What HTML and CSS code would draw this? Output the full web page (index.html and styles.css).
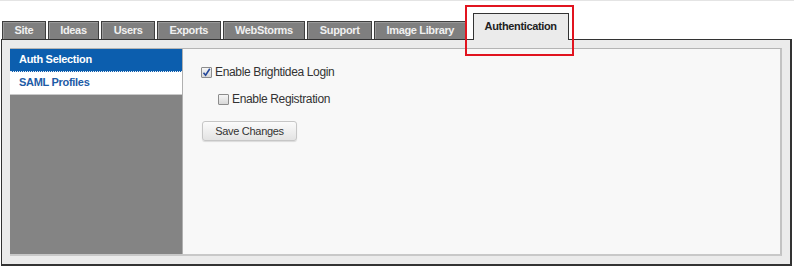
FILE: index.html
```html
<!DOCTYPE html>
<html lang="en">
<head>
    <meta charset="UTF-8">
    <title>Admin - Authentication</title>
    <link rel="stylesheet" href="styles.css">
</head>
<body>
    <div class="top-line"></div>

    <div class="header">
        <ul class="tabs">
            <li class="tab">Site</li>
            <li class="tab">Ideas</li>
            <li class="tab">Users</li>
            <li class="tab">Exports</li>
            <li class="tab">WebStorms</li>
            <li class="tab">Support</li>
            <li class="tab">Image Library</li>
            <li class="tab active">Authentication</li>
        </ul>
        <div class="highlight"></div>
    </div>

    <div class="panel">
        <div class="panel-inner">
            <ul class="side-menu">
                <li class="side-item selected">Auth Selection</li>
                <li class="side-item">SAML Profiles</li>
            </ul>
            <div class="content">
                <label class="option">
                    <span class="check checked">
                        <svg width="9" height="9" viewBox="0 0 9 9"><path d="M1.5 4.8 L3.6 7.2 L7.8 0.8" fill="none" stroke="#24479a" stroke-width="1.6"/></svg>
                    </span>
                    Enable Brightidea Login
                </label>
                <label class="option sub">
                    <span class="check"></span>
                    Enable Registration
                </label>
                <button class="save-btn">Save Changes</button>
            </div>
        </div>
    </div>
</body>
</html>
```

FILE: styles.css
```css
body {
    margin: 0;
    padding: 0;
    background: #fff;
    font-family: "Liberation Sans", Arial, sans-serif;
    color: #333;
}

.top-line {
    height: 1px;
    background: #e4e4e4;
}

.header {
    position: relative;
    margin-top: 12px;
}

.tabs {
    list-style: none;
    margin: 0;
    padding: 0 0 0 2px;
    display: flex;
    align-items: flex-end;
}

.tab {
    box-sizing: border-box;
    height: 18px;
    line-height: 17px;
    padding: 0 11.5px;
    margin-right: 2px;
    background: #7f7f7f;
    color: #f0f0f0;
    border: 1px solid #3e3e3e;
    border-bottom: none;
    box-shadow: inset 1px 1px 0 #9a9a9a;
    font-size: 11px;
    font-weight: bold;
    letter-spacing: -0.35px;
}

.tab.active {
    height: 27px;
    line-height: 25px;
    margin-left: 4px;
    margin-bottom: -1px;
    padding: 0 11px;
    position: relative;
    z-index: 1;
    background: #ebebeb;
    color: #222;
    border-color: #333;
    box-shadow: none;
}

.highlight {
    position: absolute;
    left: 465px;
    top: -8px;
    width: 105px;
    height: 47px;
    border: 2px solid #e1141f;
    z-index: 2;
}

.panel {
    box-sizing: border-box;
    margin-left: 1px;
    width: 791px;
    background: #ebebeb;
    border: 1px solid #333;
    border-right-width: 2px;
    border-bottom-width: 2px;
    padding: 8px;
}

.panel-inner {
    display: flex;
    height: 205px;
    border-top: 1px solid #b4b4b4;
    border-right: 2px solid #c2c2c2;
    border-bottom: 2px solid #c8c8c8;
}

.side-menu {
    list-style: none;
    margin: 0;
    padding: 0;
    width: 172px;
    background: #848484;
    border-right: 1px solid #b0b0b0;
}

.side-item {
    height: 22px;
    line-height: 21px;
    padding-left: 9px;
    background: #fff;
    color: #1d5ba6;
    font-size: 11px;
    font-weight: bold;
    letter-spacing: -0.3px;
    border-bottom: 1px solid #c9c9c9;
}

.side-item.selected {
    background: #0c5eae;
    color: #fff;
    border-bottom: 1px dotted #e8eef6;
}

.content {
    flex: 1;
    background: #f8f8f8;
    padding: 16px 0 0 18px;
}

.option {
    display: flex;
    align-items: center;
    gap: 3px;
    height: 14px;
    font-size: 12px;
    letter-spacing: -0.35px;
    color: #333;
}

.option.sub {
    margin-top: 13px;
    padding-left: 17px;
}

.check {
    box-sizing: border-box;
    width: 11px;
    height: 11px;
    border: 1px solid #8c8c8c;
    border-radius: 1px;
    background: linear-gradient(#f6f6f6, #d8d8d8);
    display: flex;
    align-items: center;
    justify-content: center;
}

.save-btn {
    display: block;
    margin-top: 15px;
    margin-left: 1px;
    width: 95px;
    height: 20px;
    padding: 0;
    border: 1px solid #c6c6c6;
    border-radius: 3px;
    background: linear-gradient(#fbfbfb, #e3e3e3);
    box-shadow: 0 1px 1px rgba(0, 0, 0, 0.12);
    font-family: "Liberation Sans", Arial, sans-serif;
    font-size: 11px;
    letter-spacing: -0.3px;
    color: #333;
}
```
